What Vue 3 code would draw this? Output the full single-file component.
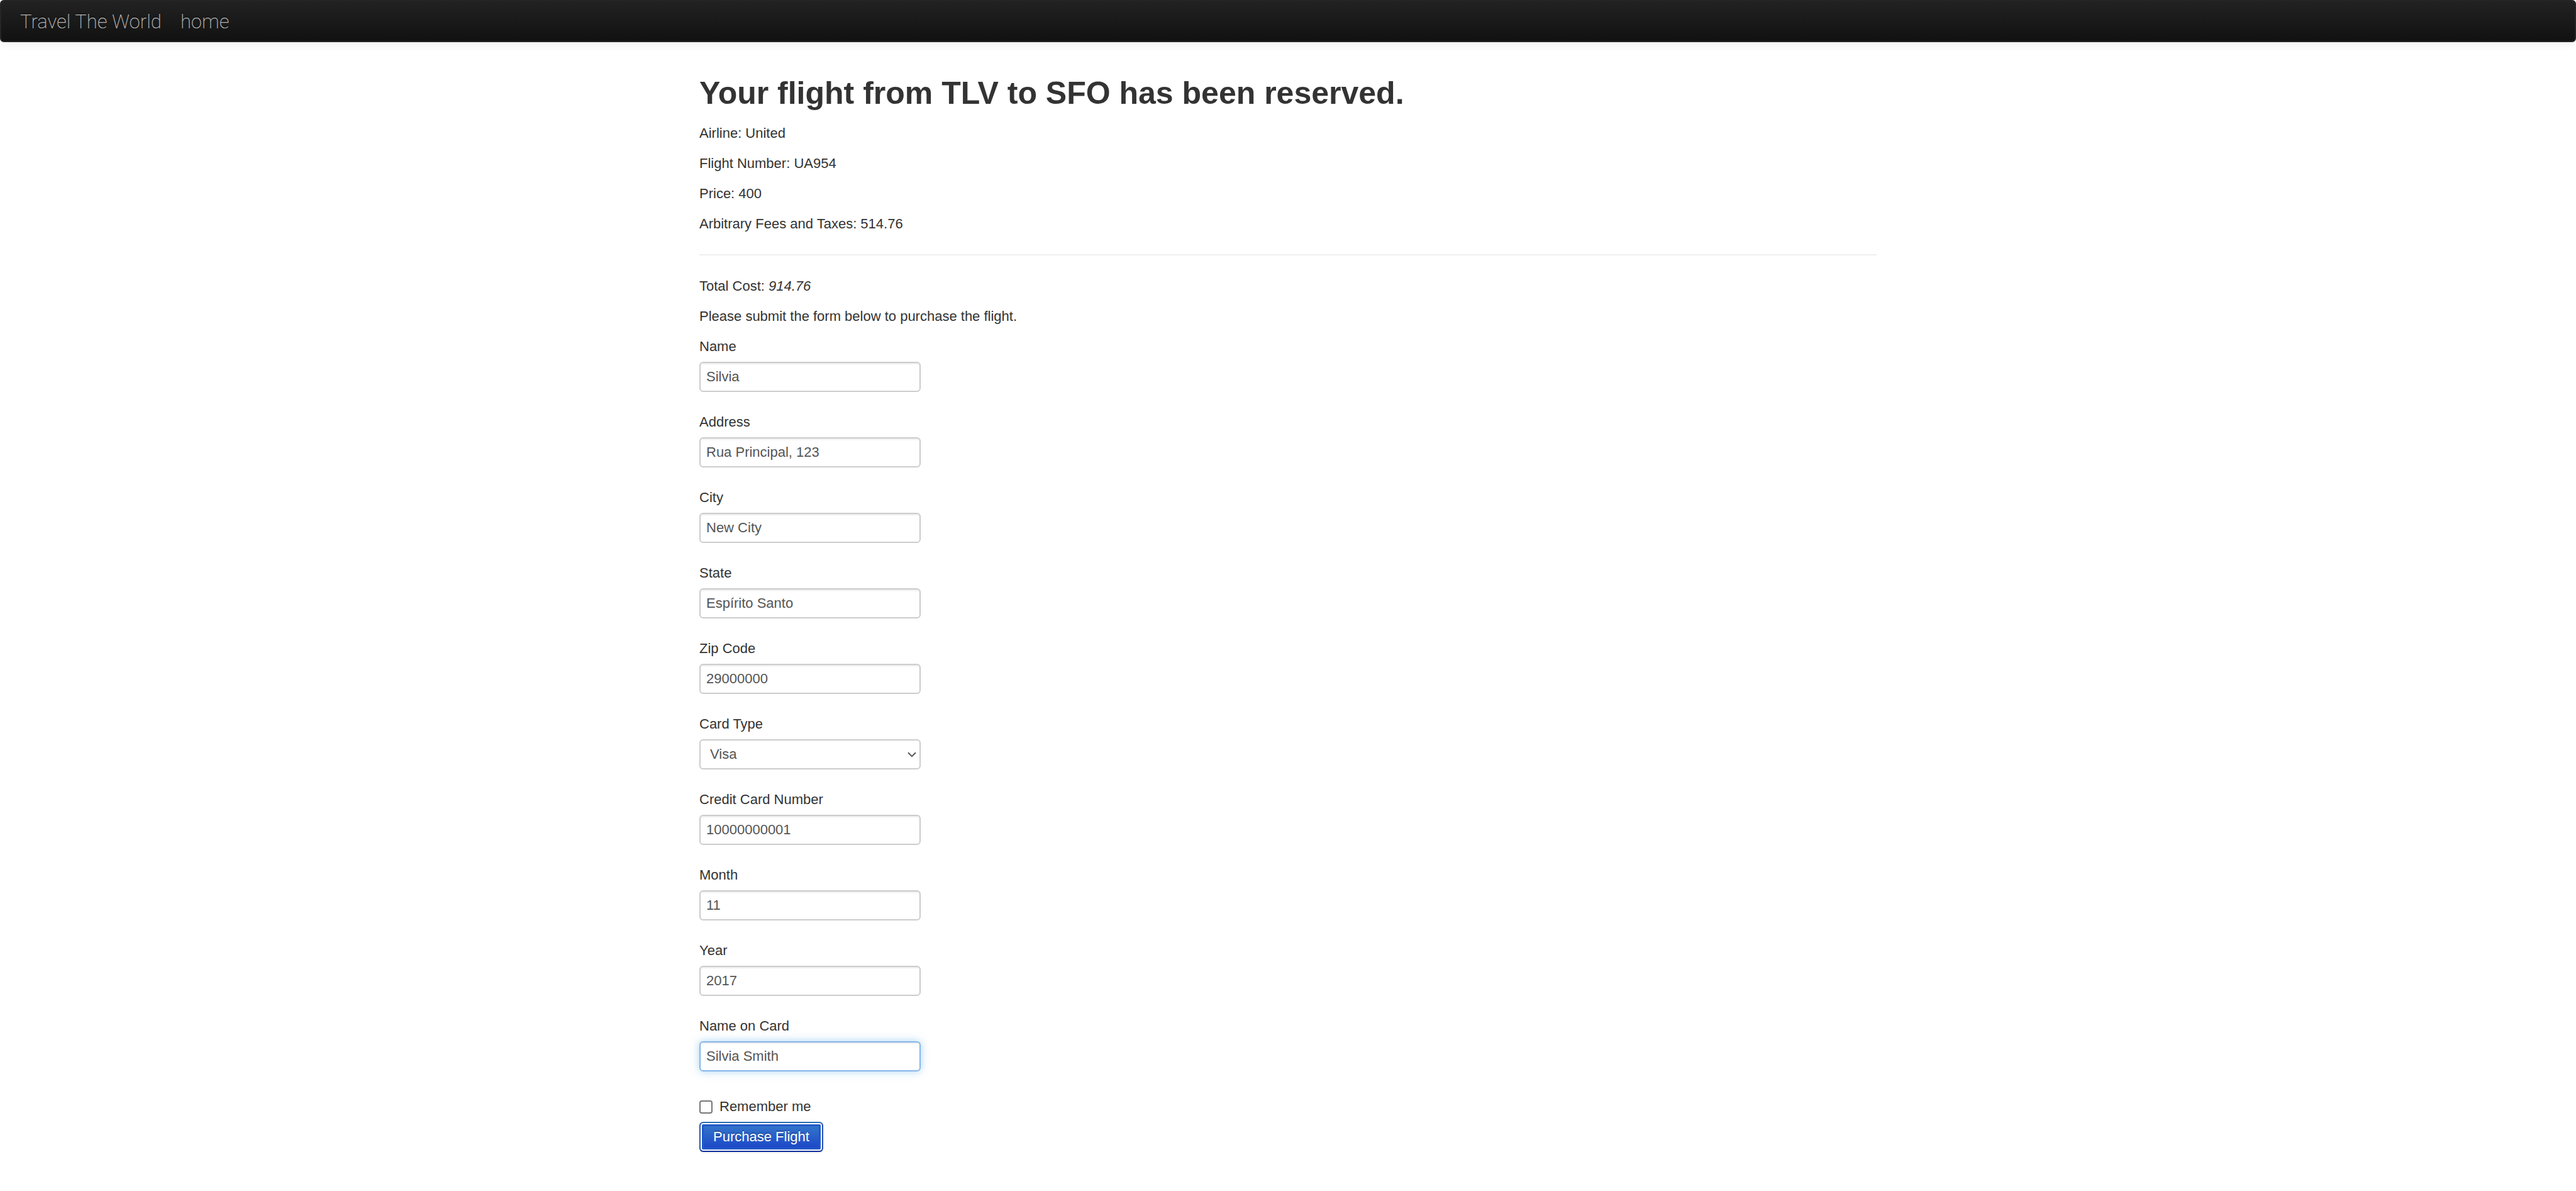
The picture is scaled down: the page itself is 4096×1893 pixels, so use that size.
<script setup>
import { reactive, ref } from 'vue'

const flight = [
  'Airline: United',
  'Flight Number: UA954',
  'Price: 400',
  'Arbitrary Fees and Taxes: 514.76',
]

const fields = reactive([
  { id: 'inputName', label: 'Name', value: 'Silvia' },
  { id: 'address', label: 'Address', value: 'Rua Principal, 123' },
  { id: 'city', label: 'City', value: 'New City' },
  { id: 'state', label: 'State', value: 'Espírito Santo' },
  { id: 'zipCode', label: 'Zip Code', value: '29000000' },
  { id: 'cardType', label: 'Card Type', value: 'Visa', options: ['Visa', 'American Express', "Diner's Club"] },
  { id: 'creditCardNumber', label: 'Credit Card Number', value: '10000000001' },
  { id: 'creditCardMonth', label: 'Month', value: '11' },
  { id: 'creditCardYear', label: 'Year', value: '2017' },
  { id: 'nameOnCard', label: 'Name on Card', value: 'Silvia Smith', active: true },
])
const remember = ref(false)
</script>

<template>
  <nav class="navbar">
    <a class="brand" href="#">Travel The World</a>
    <a class="brand" href="#">home</a>
  </nav>

  <main class="container">
    <h1>Your flight from TLV to SFO has been reserved.</h1>
    <p v-for="line in flight" :key="line">{{ line }}</p>
    <hr />
    <p>Total Cost: <em>914.76</em></p>
    <p>Please submit the form below to purchase the flight.</p>

    <form @submit.prevent>
      <div v-for="field in fields" :key="field.id" class="group">
        <label :for="field.id">{{ field.label }}</label>
        <div v-if="field.options" class="select-wrap">
          <select :id="field.id" v-model="field.value" class="control">
            <option v-for="option in field.options" :key="option">{{ option }}</option>
          </select>
          <svg class="chevron" viewBox="0 0 14 9" aria-hidden="true">
            <path d="M1 1.2l6 6 6-6" />
          </svg>
        </div>
        <input
          v-else
          :id="field.id"
          v-model="field.value"
          type="text"
          class="control"
          :class="{ active: field.active }"
        />
      </div>

      <label class="remember">
        <input v-model="remember" type="checkbox" />
        Remember me
      </label>
      <button type="submit" class="purchase">Purchase Flight</button>
    </form>
  </main>
</template>

<style>
body {
  margin: 0;
  background: #fff;
}
</style>

<style scoped>
.navbar {
  box-sizing: border-box;
  display: flex;
  align-items: center;
  gap: 30px;
  height: 67px;
  padding: 2px 30px 0;
  border: 2px solid #252525;
  border-radius: 6px;
  background: linear-gradient(#222, #111);
  box-shadow: 0 2px 16px rgba(0, 0, 0, 0.07);
}

.brand {
  color: #b4b4b4;
  font: 200 31px/32px Roboto, "Liberation Sans", sans-serif;
  text-decoration: none;
  text-shadow: 0 -2px 0 rgba(0, 0, 0, 0.25);
}

.container {
  max-width: 1872px;
  margin: 0 auto;
  padding: 33px 0;
  color: #333;
  font: 22px/32px "Liberation Sans", Arial, sans-serif;
}

h1 {
  margin: 16px 0;
  font-size: 50px;
  line-height: 64px;
}

p {
  margin: 0 0 16px;
}

hr {
  margin: 32px 0;
  border: 0;
  border-top: 2px solid #eee;
  border-bottom: 1px solid #fff;
}

.group {
  margin-bottom: 32px;
}

.group label {
  display: block;
  margin-bottom: 8px;
}

.control {
  box-sizing: border-box;
  display: block;
  width: 352px;
  height: 48px;
  margin: 0;
  padding: 0 9px;
  border: 2px solid #ccc;
  border-radius: 6px;
  background: #fff;
  box-shadow: inset 0 2px 2px rgba(0, 0, 0, 0.075);
  color: #555;
  font: inherit;
  outline: 0;
}

.control.active,
.control:focus {
  border-color: #86b7e9;
  box-shadow: inset 0 2px 2px rgba(0, 0, 0, 0.075), 0 0 13px rgba(82, 168, 236, 0.5);
}

.select-wrap {
  position: relative;
  width: 352px;
}

select.control {
  padding: 0 15px;
  appearance: none;
  box-shadow: none;
}

.chevron {
  position: absolute;
  top: 20px;
  right: 7px;
  width: 14px;
  height: 9px;
  fill: none;
  stroke: #555;
  stroke-width: 2;
  pointer-events: none;
}

.remember {
  display: flex;
  align-items: center;
  gap: 11px;
  width: max-content;
  margin: 40px 0 8px;
}

.remember input {
  box-sizing: border-box;
  width: 21px;
  height: 21px;
  margin: 0;
  border: 2px solid #767676;
  border-radius: 4px;
  background: #fff;
  appearance: none;
}

.remember input:checked {
  background: #1d48cc;
}

.purchase {
  display: block;
  height: 48px;
  padding: 0 20px;
  border: 2px solid;
  border-color: #2b6cb3 #2254b0 #10309c;
  border-radius: 6px;
  background: linear-gradient(#357acb, #1a42c8);
  box-shadow: inset 0 0 0 2px #fff, inset 0 0 0 5px #2459c8, 0 2px 3px rgba(0, 0, 0, 0.05);
  color: #fff;
  font: inherit;
  text-shadow: 0 -2px 0 rgba(0, 0, 0, 0.25);
}
</style>
